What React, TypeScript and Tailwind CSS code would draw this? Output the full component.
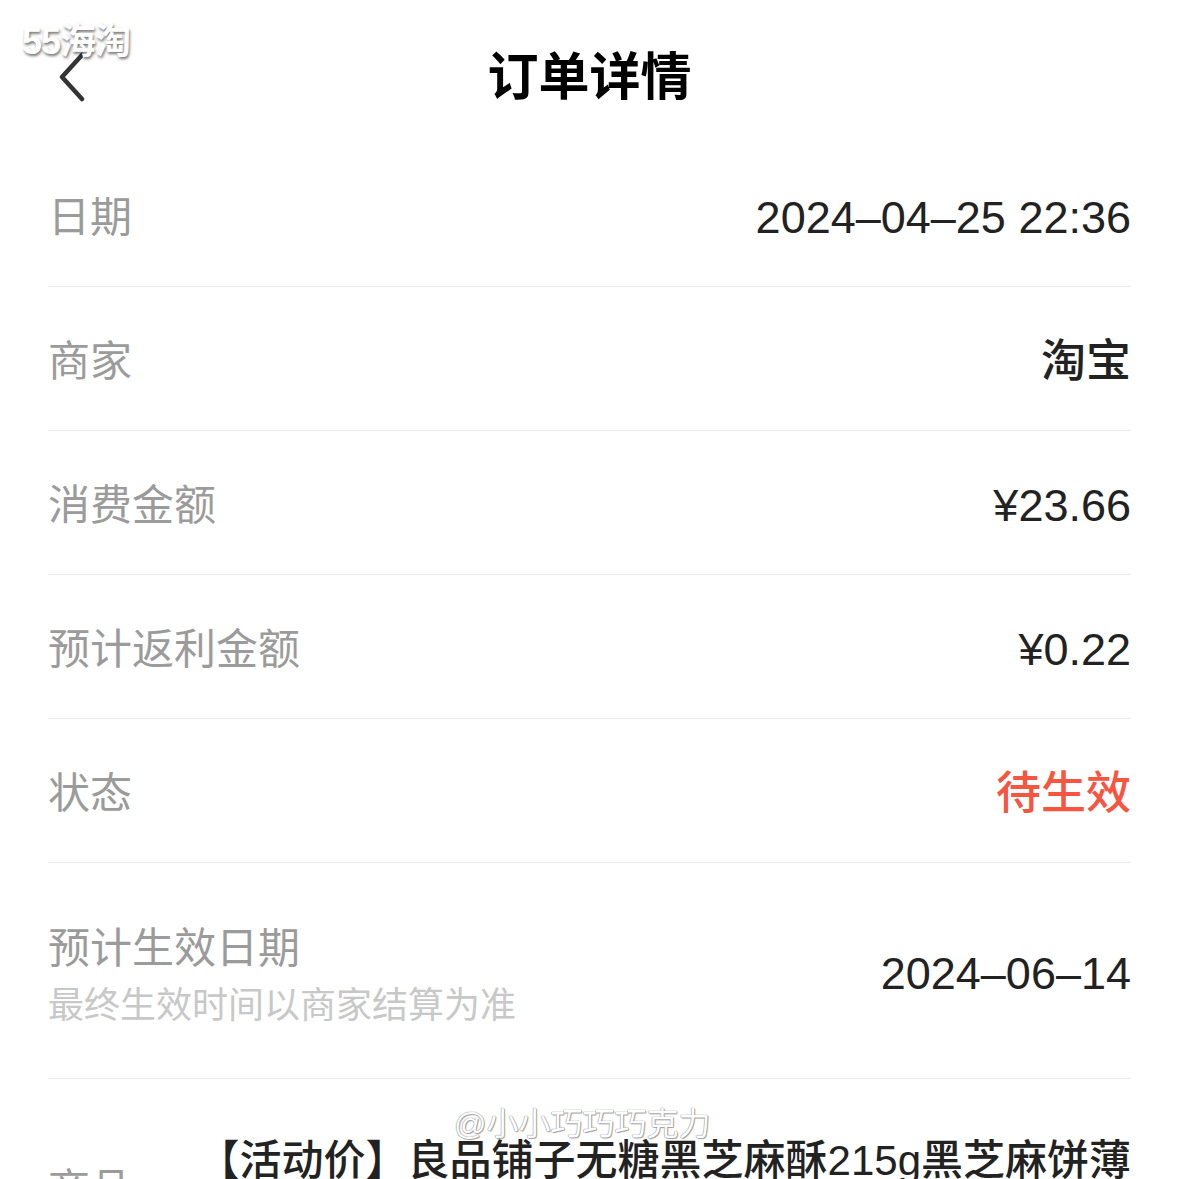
import React from "react";

const font = { fontFamily: '"Liberation Sans", "Noto Sans CJK SC", sans-serif' };

function Row({ label, value, valueClass }: { label: string; value: string; valueClass?: string }) {
  return (
    <div className="flex h-[144px] items-center justify-between border-b border-[#ececec] pt-[6px]">
      <span className="text-[42px] leading-none text-[#9b9b9b]">{label}</span>
      <span className={"text-[45px] font-medium leading-none " + (valueClass ?? "text-[#222222]")}>{value}</span>
    </div>
  );
}

export default function App() {
  return (
    <div className="relative h-[1179px] w-[1179px] overflow-hidden bg-white" style={font}>
      {/* header */}
      <div className="relative flex h-[143px] items-center justify-center pt-[12px]">
        <svg className="absolute left-[56px] top-[52px]" width="32" height="50" viewBox="0 0 32 50">
          <polyline points="26,3 6,25 26,47" fill="none" stroke="#333333" strokeWidth="4.5" strokeLinecap="round" strokeLinejoin="round" />
        </svg>
        <span className="text-[51px] font-bold leading-none text-black">订单详情</span>
      </div>

      <div className="mx-[48px]">
        <Row label="日期" value="2024–04–25 22:36" />
        <Row label="商家" value="淘宝" />
        <Row label="消费金额" value="¥23.66" />
        <Row label="预计返利金额" value="¥0.22" />
        <Row label="状态" value="待生效" valueClass="text-[#f6553f]" />
        <div className="flex h-[216px] items-center justify-between border-b border-[#ececec] pt-[6px]">
          <div className="flex flex-col gap-[18px] pt-[4px]">
            <span className="text-[42px] leading-none text-[#9b9b9b]">预计生效日期</span>
            <span className="text-[36px] leading-none text-[#c8c8c8]">最终生效时间以商家结算为准</span>
          </div>
          <span className="text-[45px] font-medium leading-none text-[#222222]">2024–06–14</span>
        </div>
        <div className="flex items-start justify-between">
          <span className="pt-[90px] text-[42px] leading-none text-[#9b9b9b]">商品</span>
          <span className="whitespace-nowrap pt-[54px] text-right text-[42px] font-medium leading-[56px] text-[#222222]">
            【活动价】良品铺子无糖黑芝麻酥215g黑芝麻饼薄
          </span>
        </div>
      </div>

      {/* watermarks */}
      <div className="absolute left-[22px] top-[24px] text-[36px] font-bold leading-none tracking-[-1px] text-white [text-shadow:1px_2px_3px_rgba(0,0,0,0.55)]">
        55海淘
      </div>
      <div className="absolute left-[454px] top-[1108px] text-[32px] leading-none text-white [text-shadow:0_0_1px_#888,0_0_1px_#888,1px_1px_1px_rgba(0,0,0,0.35)]">
        @小小巧巧巧克力
      </div>
    </div>
  );
}
